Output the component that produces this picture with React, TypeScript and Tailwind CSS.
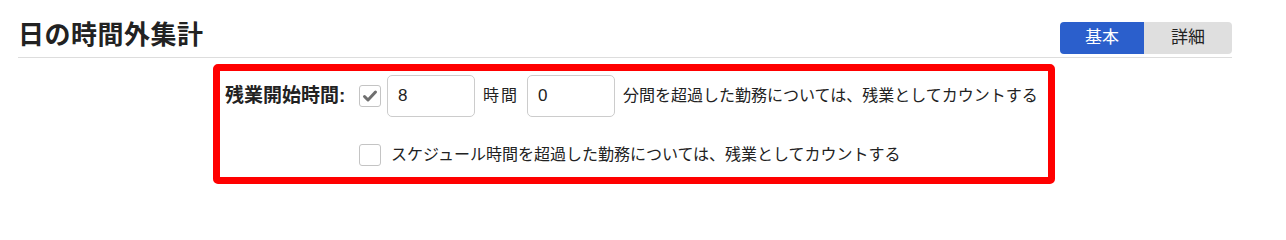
import React from "react";

const font = "font-['Liberation_Sans','Noto_Sans_CJK_JP',sans-serif]";

const CheckBox = ({ checked }: { checked?: boolean }) => (
  <span className="flex h-[22px] w-[22px] shrink-0 items-center justify-center rounded-[3px] border border-[#c4c4c4] bg-white">
    {checked && (
      <svg width="16" height="16" viewBox="0 0 16 16">
        <path d="M2.5 8.5 L6 12 L13.5 4" fill="none" stroke="#6f6f6f" strokeWidth="3" strokeLinecap="round" strokeLinejoin="round" />
      </svg>
    )}
  </span>
);

const NumInput = ({ value }: { value: string }) => (
  <div className="flex h-[42px] w-[88px] items-center rounded-[5px] border border-[#cccccc] bg-white pl-[10px] text-[17px] text-[#222]">
    {value}
  </div>
);

const App = () => {
  return (
    <div className={`${font} h-[201px] w-[1286px] overflow-hidden bg-white text-[#222]`}>
      <div className="ml-[18px] w-[1214px]">
        <div className="flex h-[58px] items-end justify-between border-b border-[#dddddd] pb-[3px]">
          <h2 className="mb-[6px] text-[26px] leading-none font-bold tracking-[0.5px] text-[#222]">
            日の時間外集計
          </h2>
          <div className="flex h-[32px] overflow-hidden rounded-[4px] text-[17px]">
            <div className="flex w-[84px] items-center justify-center bg-[#2b5fcc] text-white">基本</div>
            <div className="flex w-[88px] items-center justify-center bg-[#dfdfdf] text-[#222]">詳細</div>
          </div>
        </div>

        <div className="ml-[195px] mt-[6px] h-[120px] w-[842px] rounded-[5px] border-[7px] border-[#ff0000] pl-[5px] pt-[4px]">
          <div className="flex h-[42px] items-center">
            <div className="w-[134px] shrink-0 text-[19px] font-bold">残業開始時間:</div>
            <CheckBox checked />
            <div className="ml-[6px]">
              <NumInput value="8" />
            </div>
            <span className="ml-[8px] mr-[8px] text-[16px] tracking-[2px]">時間</span>
            <NumInput value="0" />
            <span className="ml-[8px] text-[16px]">分間を超過した勤務については、残業としてカウントする</span>
          </div>
          <div className="mt-[26px] flex items-center pl-[134px]">
            <CheckBox />
            <span className="ml-[10px] text-[16px]">スケジュール時間を超過した勤務については、残業としてカウントする</span>
          </div>
        </div>
      </div>
    </div>
  );
};

export default App;
